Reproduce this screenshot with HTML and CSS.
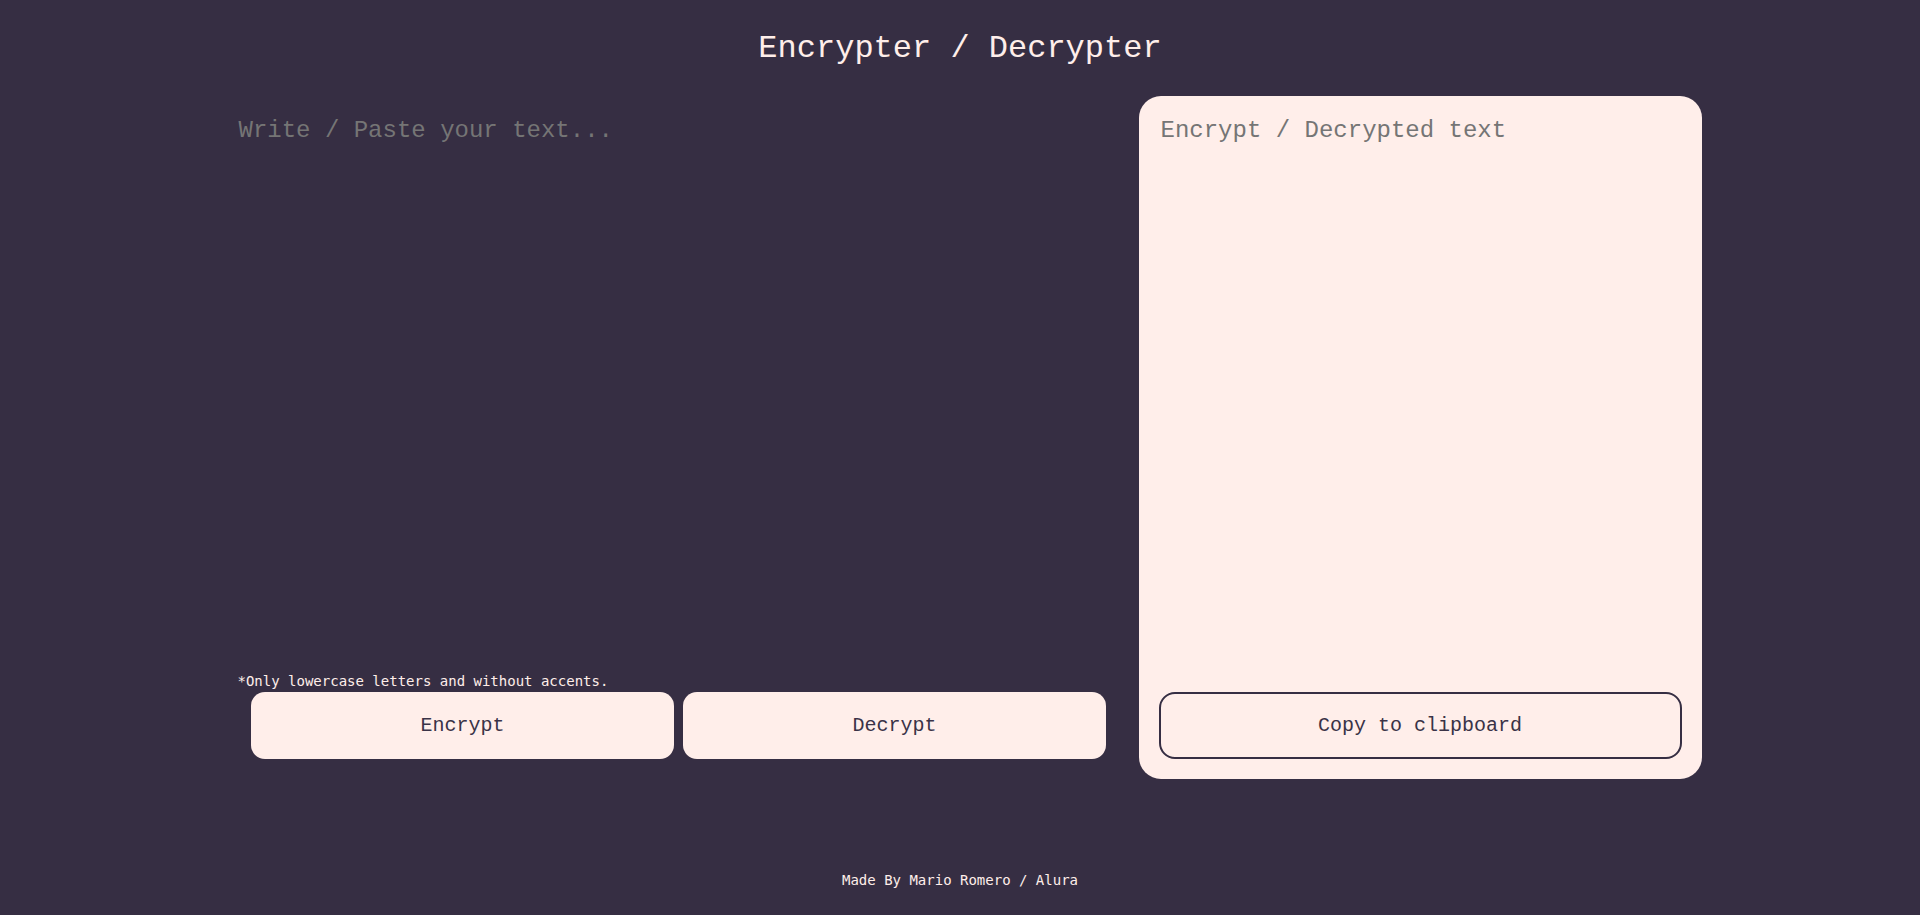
FILE: index.html
```html
<!DOCTYPE html>
<html lang="en">
<head>
<meta charset="utf-8">
<title>Encrypter / Decrypter</title>
<link rel="stylesheet" href="styles.css">
</head>
<body>
<header class="header">
  <h1 class="title">Encrypter / Decrypter</h1>
</header>
<main class="main">
  <section class="input-col">
    <textarea class="input-text" placeholder="Write / Paste your text..."></textarea>
    <p class="note">*Only lowercase letters and without accents.</p>
    <div class="actions">
      <button class="btn">Encrypt</button>
      <button class="btn">Decrypt</button>
    </div>
  </section>
  <section class="output-panel">
    <textarea class="output-text" placeholder="Encrypt / Decrypted text" readonly></textarea>
    <button class="btn btn-outline">Copy to clipboard</button>
  </section>
</main>
<footer class="footer">Made By Mario Romero / Alura</footer>
</body>
</html>
```

FILE: styles.css
```css
* { box-sizing: border-box; }

html, body {
  margin: 0;
  padding: 0;
}

body {
  background: #362e43;
  color: #ffeeea;
  font-family: "Liberation Mono", "DejaVu Sans Mono", monospace;
  min-height: 915px;
}

.header {
  padding-top: 31px;
}

.title {
  margin: 0;
  text-align: center;
  font-family: "Liberation Mono", monospace;
  font-weight: normal;
  font-size: 32px;
  line-height: 36px;
  color: #ffeeea;
}

.main {
  display: flex;
  justify-content: center;
  margin-top: 29px;
}

.input-col {
  width: 920px;
  height: 683px;
  display: flex;
  flex-direction: column;
}

.input-text,
.output-text {
  flex: 1;
  background: transparent;
  border: none;
  outline: none;
  resize: none;
  font-family: "Liberation Mono", monospace;
  font-size: 24px;
  line-height: 28px;
  color: #ffeeea;
}

.input-text {
  padding: 21px 20px 20px 20px;
}

.output-text {
  padding: 1px 2px 0 2px;
  color: #362e43;
}

.input-text::placeholder,
.output-text::placeholder {
  color: #757575;
}

.note {
  margin: 0 0 2px 0;
  padding-left: 19px;
  font-family: "DejaVu Sans Mono", monospace;
  font-size: 14px;
  line-height: 17px;
  color: #ffeeea;
}

.actions {
  display: flex;
  justify-content: center;
  gap: 9px;
  margin-bottom: 20px;
}

.btn {
  width: 423px;
  height: 67px;
  background: #ffeeea;
  border: none;
  border-radius: 14px;
  font-family: "Liberation Mono", monospace;
  font-size: 20px;
  color: #3a3347;
  cursor: pointer;
}

.output-panel {
  width: 563px;
  height: 683px;
  background: #ffeeea;
  border-radius: 22px;
  padding: 20px 20px 20px 20px;
  display: flex;
  flex-direction: column;
}

.btn-outline {
  width: 100%;
  border: 2px solid #362e43;
  border-radius: 16px;
}

.footer {
  margin-top: 93px;
  text-align: center;
  font-family: "DejaVu Sans Mono", monospace;
  font-size: 14px;
  line-height: 17px;
  color: #ffeeea;
}
```
